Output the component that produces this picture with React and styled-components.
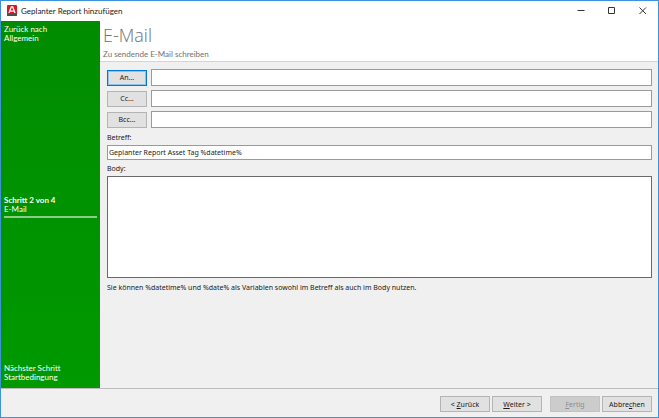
import React, { useState } from "react";
import styled, { createGlobalStyle } from "styled-components";

function App() {
  const [to, setTo] = useState("");
  const [cc, setCc] = useState("");
  const [bcc, setBcc] = useState("");
  const [subject, setSubject] = useState("Geplanter Report Asset Tag %datetime%");
  const [body, setBody] = useState("");

  return (
    <>
      <GlobalStyle />
      <Window>
        <TitleBar>
          <Logo />
          <WindowTitle>Geplanter Report hinzufügen</WindowTitle>
          <WindowButton aria-label="Minimieren">
            <svg width="8" height="8" viewBox="0 0 8 8">
              <path d="M0.5 3.5H7.5" />
            </svg>
          </WindowButton>
          <WindowButton aria-label="Maximieren">
            <svg width="8" height="8" viewBox="0 0 8 8">
              <path d="M0.5 0.5H6.5V6.5H0.5Z" />
            </svg>
          </WindowButton>
          <WindowButton aria-label="Schließen">
            <svg width="8" height="8" viewBox="0 0 8 8">
              <path d="M0.5 0.5L7 7M7 0.5L0.5 7" />
            </svg>
          </WindowButton>
        </TitleBar>

        <Main>
          <Sidebar>
            <Step>
              Zurück nach
              <br />
              Allgemein
            </Step>
            <Step $current>
              <b>Schritt 2 von 4</b>
              <br />
              E-Mail
            </Step>
            <Step>
              Nächster Schritt
              <br />
              Startbedingung
            </Step>
          </Sidebar>

          <Page>
            <PageHeader>
              <h1>E-Mail</h1>
              <p>Zu sendende E-Mail schreiben</p>
            </PageHeader>
            <Form>
              <Recipients>
                <Button $active id="to">An...</Button>
                <Input aria-labelledby="to" value={to} onChange={(e) => setTo(e.target.value)} />
                <Button id="cc">Cc...</Button>
                <Input aria-labelledby="cc" value={cc} onChange={(e) => setCc(e.target.value)} />
                <Button id="bcc">Bcc...</Button>
                <Input aria-labelledby="bcc" value={bcc} onChange={(e) => setBcc(e.target.value)} />
              </Recipients>
              <Label htmlFor="subject">Betreff:</Label>
              <Input $small id="subject" value={subject} onChange={(e) => setSubject(e.target.value)} />
              <Label htmlFor="body">Body:</Label>
              <TextArea id="body" value={body} onChange={(e) => setBody(e.target.value)} />
              <Hint>
                Sie können %datetime% und %date% als Variablen sowohl im Betreff als auch im Body nutzen.
              </Hint>
            </Form>
          </Page>
        </Main>

        <Footer>
          <ButtonPair>
            <Button>&lt; <u>Z</u>urück</Button>
            <Button><u>W</u>eiter &gt;</Button>
          </ButtonPair>
          <ButtonPair>
            <Button disabled><u>F</u>ertig</Button>
            <Button>Abbre<u>c</u>hen</Button>
          </ButtonPair>
        </Footer>
      </Window>
    </>
  );
}

function Logo() {
  return (
    <svg width="10" height="12" viewBox="0 0 10 12" aria-hidden="true">
      <rect width="10" height="11" rx="1" fill="#e2131b" />
      <path d="M0 9H10V10Q10 11 9 11H1Q0 11 0 10Z" fill="#4d4d4f" />
      <path d="M2 8L4.3 2H5.7L8 8M3 6.2H7" fill="none" stroke="#fff" strokeWidth="1.3" />
    </svg>
  );
}

const GlobalStyle = createGlobalStyle`
  * {
    box-sizing: border-box;
  }
  body {
    margin: 0;
    background: #f0f0f0;
    color: #1a1a1a;
    font-family: "Noto Sans", "Open Sans", sans-serif;
    font-size: 7px;
    line-height: 9px;
  }
  button, input, textarea {
    font: inherit;
    color: inherit;
    margin: 0;
    border-radius: 0;
  }
`;

const Window = styled.div`
  display: flex;
  flex-direction: column;
  min-height: 100vh;
  border: 1px solid #3a93dc;
`;

const TitleBar = styled.header`
  display: flex;
  align-items: center;
  height: 20px;
  padding-left: 6px;
  background: #fff;
`;

const WindowTitle = styled.span`
  flex: 1;
  margin-left: 4px;
  font-family: Lato, sans-serif;
  font-size: 8px;
`;

const WindowButton = styled.button`
  display: flex;
  align-items: center;
  justify-content: center;
  width: 31px;
  height: 20px;
  padding: 0;
  border: none;
  background: none;
  svg {
    fill: none;
    stroke: #333;
    stroke-width: 1;
  }
`;

const Main = styled.div`
  display: flex;
  flex: 1;
`;

const Sidebar = styled.nav`
  display: flex;
  flex-direction: column;
  justify-content: space-between;
  flex: 0 0 99px;
  padding: 4px 3px 6px;
  background: linear-gradient(#008c00, #009900);
  color: #fff;
  font-family: Lato, sans-serif;
  font-size: 8px;
  line-height: 9px;
`;

const Step = styled.div`
  padding: ${(props) => (props.$current ? "7px 0 2px" : "0")};
  border-bottom: ${(props) => (props.$current ? "2px solid #8ccb8c" : "none")};
`;

const Page = styled.main`
  display: flex;
  flex-direction: column;
  flex: 1;
  min-width: 0;
`;

const PageHeader = styled.div`
  height: 41px;
  padding: 2px 3px 0;
  background: #fff;
  border-bottom: 1px solid #d4d4d4;
  color: #707070;
  font-family: Lato, sans-serif;
  h1 {
    margin: 0;
    font-family: "Open Sans", sans-serif;
    font-size: 18px;
    font-weight: 300;
    line-height: 24px;
  }
  p {
    margin: 3px 0 0;
    font-size: 8px;
  }
`;

const Form = styled.form`
  display: flex;
  flex-direction: column;
  flex: 1;
  padding: 7px 6px 0 7px;
`;

const Recipients = styled.div`
  display: grid;
  grid-template-columns: 40px 1fr;
  align-items: center;
  gap: 4px;
  margin-bottom: 1px;
`;

const Button = styled.button.attrs({ type: "button" })`
  height: 16px;
  padding: 0;
  border: ${(props) => (props.$active ? "1px solid #0078d7" : "1px solid #b4b4b4")};
  box-shadow: ${(props) => (props.$active ? "inset 0 0 0 1px #8fc2ee" : "none")};
  background: #e1e1e1;
  text-align: center;
  &:disabled {
    background: #cccccc;
    border-color: #c2c2c2;
    color: #8c8c8c;
  }
`;

const Input = styled.input`
  width: 100%;
  height: ${(props) => (props.$small ? "15px" : "17px")};
  padding: 0 1px;
  border: 1px solid #9a9a9a;
  background: #fff;
  outline: none;
`;

const Label = styled.label`
  padding: 4px 0 3px;
`;

const TextArea = styled.textarea`
  display: block;
  width: 100%;
  height: 102px;
  padding: 1px;
  border: 1px solid #6a6a6a;
  background: #fff;
  outline: none;
  resize: none;
`;

const Hint = styled.p`
  margin: 5px 0;
`;

const Footer = styled.footer`
  display: flex;
  justify-content: flex-end;
  gap: 8px;
  padding: 7px 6px 5px;
  border-top: 1px solid #bdbdbd;
`;

const ButtonPair = styled.div`
  display: grid;
  grid-template-columns: 50px 50px;
  gap: 2px;
`;

export default App;
